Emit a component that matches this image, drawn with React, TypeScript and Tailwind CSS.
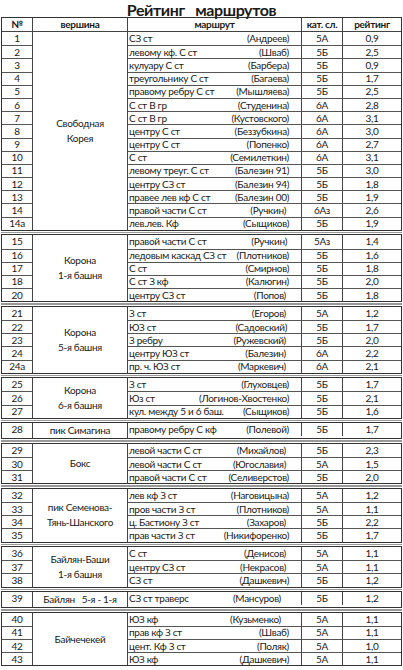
import React from "react";

type Row = [string, string, string, string, string, number?];
type Group = { peak: string[]; rows: Row[] };

const groups: Group[] = [
  {
    peak: ["Свободная", "Корея"],
    rows: [
      ["1", "СЗ ст", "(Андреев)", "5А", "0,9"],
      ["2", "левому кф. С ст", "(Шваб)", "5Б", "2,5"],
      ["3", "кулуару С ст", "(Барбера)", "5Б", "0,9"],
      ["4", "треугольнику С ст", "(Багаева)", "5Б", "1,7"],
      ["5", "правому ребру С ст", "(Мышляева)", "5Б", "2,5"],
      ["6", "С ст В гр", "(Студенина)", "6А", "2,8"],
      ["7", "С ст В гр", "(Кустовского)", "6А", "3,1"],
      ["8", "центру С ст", "(Беззубкина)", "6А", "3,0"],
      ["9", "центру С ст", "(Попенко)", "6А", "2,7"],
      ["10", "С ст", "(Семилеткин)", "6А", "3,1"],
      ["11", "левому треуг. С ст", "(Балезин 91)", "5Б", "3,0"],
      ["12", "центру СЗ ст", "(Балезин 94)", "5Б", "1,8"],
      ["13", "правее лев кф С ст", "(Балезин 00)", "5Б", "1,9"],
      ["14", "правой части С ст", "(Ручкин)", "6Аз", "2,6", 16],
      ["14а", "лев.лев. Кф", "(Сыщиков)", "5Б", "1,9"],
    ],
  },
  {
    peak: ["Корона", "1-я башня"],
    rows: [
      ["15", "правой части С ст", "(Ручкин)", "5Аз", "1,4", 15],
      ["16", "ледовым каскад СЗ ст", "(Плотников)", "5Б", "1,6"],
      ["17", "С ст", "(Смирнов)", "5Б", "1,8"],
      ["18", "С ст З кф", "(Калюгин)", "5Б", "2,0"],
      ["20", "центру СЗ ст", "(Попов)", "5Б", "1,8", 16],
    ],
  },
  {
    peak: ["Корона", "5-я башня"],
    rows: [
      ["21", "З ст", "(Егоров)", "5А", "1,2", 16],
      ["22", "ЮЗ ст", "(Садовский)", "5Б", "1,7", 15],
      ["23", "З ребру", "(Ружевский)", "5Б", "2,0", 16],
      ["24", "центру ЮЗ ст", "(Балезин)", "6А", "2,2", 16],
      ["24а", "пр. ч. ЮЗ ст", "(Маркевич)", "6А", "2,1", 16],
    ],
  },
  {
    peak: ["Корона", "6-я башня"],
    rows: [
      ["25", "З ст", "(Глуховцев)", "5Б", "1,7"],
      ["26", "Юз ст", "(Логинов-Хвостенко)", "5Б", "2,1"],
      ["27", "кул. между 5 и 6 баш.", "(Сыщиков)", "5Б", "1,6"],
    ],
  },
  { peak: ["пик Симагина"], rows: [["28", "правому ребру С кф", "(Полевой)", "5Б", "1,7"]] },
  {
    peak: ["Бокс"],
    rows: [
      ["29", "левой части С ст", "(Михайлов)", "5Б", "2,3", 16],
      ["30", "левой части С ст", "(Югославия)", "5А", "1,5", 16],
      ["31", "правой части С ст", "(Селиверстов)", "5Б", "2,0"],
    ],
  },
  {
    peak: ["пик Семенова-", "Тянь-Шанского"],
    rows: [
      ["32", "лев кф З ст", "(Наговицына)", "5А", "1,2"],
      ["33", "пров части З ст", "(Плотников)", "5А", "1,1"],
      ["34", "ц. Бастиону З ст", "(Захаров)", "5Б", "2,2", 16],
      ["35", "прав части З ст", "(Никифоренко)", "5Б", "1,7"],
    ],
  },
  {
    peak: ["Байлян-Баши", "1-я башня"],
    rows: [
      ["36", "С ст", "(Денисов)", "5А", "1,1", 16],
      ["37", "центру СЗ ст", "(Некрасов)", "5А", "1,1", 16],
      ["38", "СЗ ст", "(Дашкевич)", "5Б", "1,2"],
    ],
  },
  { peak: ["Байлян   5-я - 1-я"], rows: [["39", "СЗ ст траверс", "(Мансуров)", "5Б", "1,2", 21]] },
  {
    peak: ["Байчечекей"],
    rows: [
      ["40", "ЮЗ кф", "(Кузьменко)", "5А", "1,1", 21],
      ["41", "прав кф З ст", "(Шваб)", "5А", "1,1"],
      ["42", "цент. Кф З ст", "(Поляк)", "5А", "1,0"],
      ["43", "ЮЗ кф", "(Дашкевич)", "5А", "1,1"],
    ],
  },
];

function Header() {
  return (
    <div className="flex h-[14px] border-b border-[#444] font-bold">
      <div className="w-[30px] flex items-center justify-center">№</div>
      <div className="w-[96px] border-x border-[#444] flex items-center justify-center">вершина</div>
      <div className="w-[173px] flex items-center justify-center">маршрут</div>
      <div className="w-[41px] border-l border-[#444] flex items-center justify-center">кат. сл.</div>
      <div className="flex-1 border-l border-[#444] flex items-center justify-center">рейтинг</div>
    </div>
  );
}

function GroupTable({ g, header }: { g: Group; header?: boolean }) {
  return (
    <div className="border-[1.5px] border-[#333] flex flex-col">
      {header && <Header />}
      <div className="flex">
        <div className="w-[30px] flex flex-col">
          {g.rows.map((r, i) => (
            <div
              key={i}
              className="h-[13.2px] flex items-center justify-center border-t border-[#555] first:border-t-0"
            >
              {r[0]}
            </div>
          ))}
        </div>
        <div className="w-[96px] border-x border-[#444] flex flex-col items-center justify-center text-center leading-[15px]">
          {g.peak.map((p, i) => (
            <div key={i} className="whitespace-pre">
              {p}
            </div>
          ))}
        </div>
        <div className="flex-1 flex flex-col">
          {g.rows.map((r, i) => (
            <div key={i} className="h-[13.2px] flex border-t border-[#555] first:border-t-0">
              <div
                className="w-[173px] flex items-center justify-between pl-[1px] whitespace-pre"
                style={{ paddingRight: (r[5] ?? 13) - 1 }}
              >
                <span>{r[1]}</span>
                <span>{r[2]}</span>
              </div>
              <div className="w-[41px] border-l border-[#444] flex items-center justify-center">{r[3]}</div>
              <div className="flex-1 border-l border-[#444] flex items-center justify-center">{r[4]}</div>
            </div>
          ))}
        </div>
      </div>
    </div>
  );
}

export default function App() {
  return (
    <div
      className="w-[403px] h-[670px] bg-white text-[#1a1a1a] text-[10px] tracking-[-0.3px] overflow-hidden"
      style={{ fontFamily: "Lato, 'Noto Sans', sans-serif" }}
    >
      <div className="h-[17px] pt-[2px] flex items-center justify-center text-[16px] tracking-[-0.4px] font-bold whitespace-pre leading-[16px]">
        Рейтинг   маршрутов
      </div>
      <div className="px-[1px] flex flex-col">
        {groups.map((g, i) => (
          <React.Fragment key={i}>
            {i > 0 && (
              <div className="h-[3.5px] flex items-center">
                <div className="h-[1.5px] w-full bg-[#999]" />
              </div>
            )}
            <GroupTable g={g} header={i === 0} />
          </React.Fragment>
        ))}
      </div>
    </div>
  );
}
